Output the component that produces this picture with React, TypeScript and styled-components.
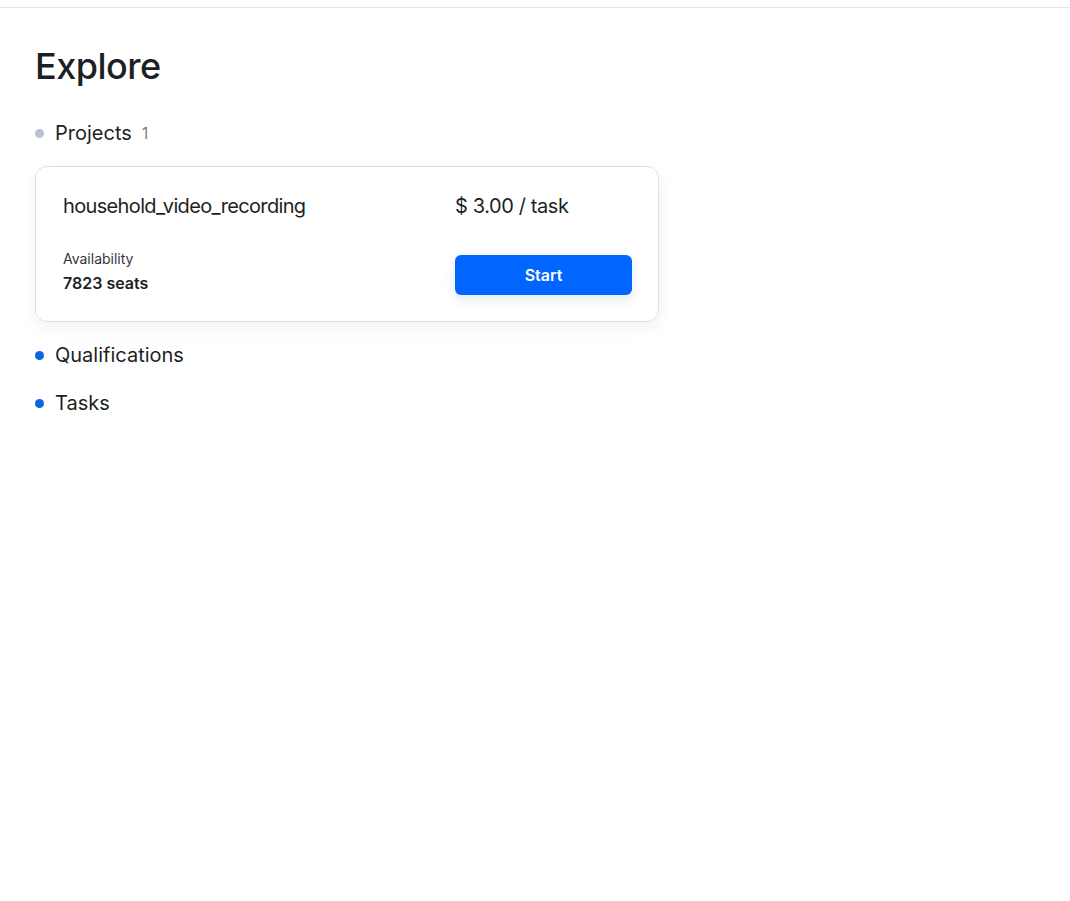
import React from "react";
import styled, { createGlobalStyle } from "styled-components";

const Global = createGlobalStyle`
  html, body { margin: 0; padding: 0; background: #ffffff; }
  body { font-family: Inter, "Noto Sans", sans-serif; color: #1d1f24; }
`;

const TopBar = styled.div`
  height: 7px;
  border-bottom: 1px solid #e4e6ea;
`;

const Main = styled.main`
  padding: 36px 35px 0 35px;
`;

const Title = styled.h1`
  margin: 0 0 31px 0;
  font-size: 36px;
  line-height: 44px;
  font-weight: 500;
  letter-spacing: -0.5px;
  color: #1d1f24;
`;

const Section = styled.section`
  display: flex;
  flex-direction: column;
`;

const SectionHead = styled.div`
  display: flex;
  align-items: center;
  gap: 11px;
  height: 28px;
`;

const Dot = styled.span<{ $muted?: boolean }>`
  width: 9px;
  height: 9px;
  border-radius: 50%;
  background: ${(p) => (p.$muted ? "#b9c3d3" : "#0a66e2")};
  flex: none;
`;

const SectionName = styled.span`
  font-size: 20px;
  font-weight: 400;
  color: #1d1f24;
`;

const Count = styled.span`
  font-size: 16px;
  color: #7b7f87;
  margin-left: -1px;
`;

const Card = styled.div`
  margin: 19px 0 19px 0;
  width: 624px;
  box-sizing: border-box;
  border: 1px solid #dde1e7;
  border-radius: 12px;
  padding: 25px 26px 26px 27px;
  box-shadow: 0 6px 16px rgba(20, 30, 50, 0.06);
  display: grid;
  grid-template-columns: 1fr 177px;
  row-gap: 35px;
  column-gap: 20px;
`;

const ProjectName = styled.div`
  font-size: 20px;
  line-height: 28px;
  color: #1d1f24;
  letter-spacing: -0.65px;
`;

const Price = styled.div`
  font-size: 20px;
  line-height: 28px;
  color: #1d1f24;
  letter-spacing: -0.4px;
`;

const Availability = styled.div`
  display: flex;
  flex-direction: column;
  gap: 4px;
  align-self: start;
  margin-top: -6px;
`;

const Label = styled.span`
  font-size: 14px;
  line-height: 20px;
  color: #33363c;
`;

const Seats = styled.span`
  font-size: 16px;
  line-height: 20px;
  font-weight: 600;
  color: #1d1f24;
`;

const StartButton = styled.button`
  height: 40px;
  border: none;
  border-radius: 6px;
  background: #0066ff;
  color: #ffffff;
  font-family: Inter, "Noto Sans", sans-serif;
  font-size: 16px;
  font-weight: 600;
  cursor: pointer;
  box-shadow: 0 4px 12px rgba(0, 60, 160, 0.12);
  align-self: start;
`;

const Spacer = styled.div<{ $h: number }>`
  height: ${(p) => p.$h}px;
`;

export default function App() {
  return (
    <>
      <Global />
      <TopBar />
      <Main>
        <Title>Explore</Title>
        <Section>
          <SectionHead>
            <Dot $muted />
            <SectionName>Projects</SectionName>
            <Count>1</Count>
          </SectionHead>
          <Card>
            <ProjectName>household_video_recording</ProjectName>
            <Price>$ 3.00 / task</Price>
            <Availability>
              <Label>Availability</Label>
              <Seats>7823 seats</Seats>
            </Availability>
            <StartButton>Start</StartButton>
          </Card>
        </Section>
        <Section>
          <SectionHead>
            <Dot />
            <SectionName>Qualifications</SectionName>
          </SectionHead>
        </Section>
        <Spacer $h={20} />
        <Section>
          <SectionHead>
            <Dot />
            <SectionName>Tasks</SectionName>
          </SectionHead>
        </Section>
      </Main>
    </>
  );
}
